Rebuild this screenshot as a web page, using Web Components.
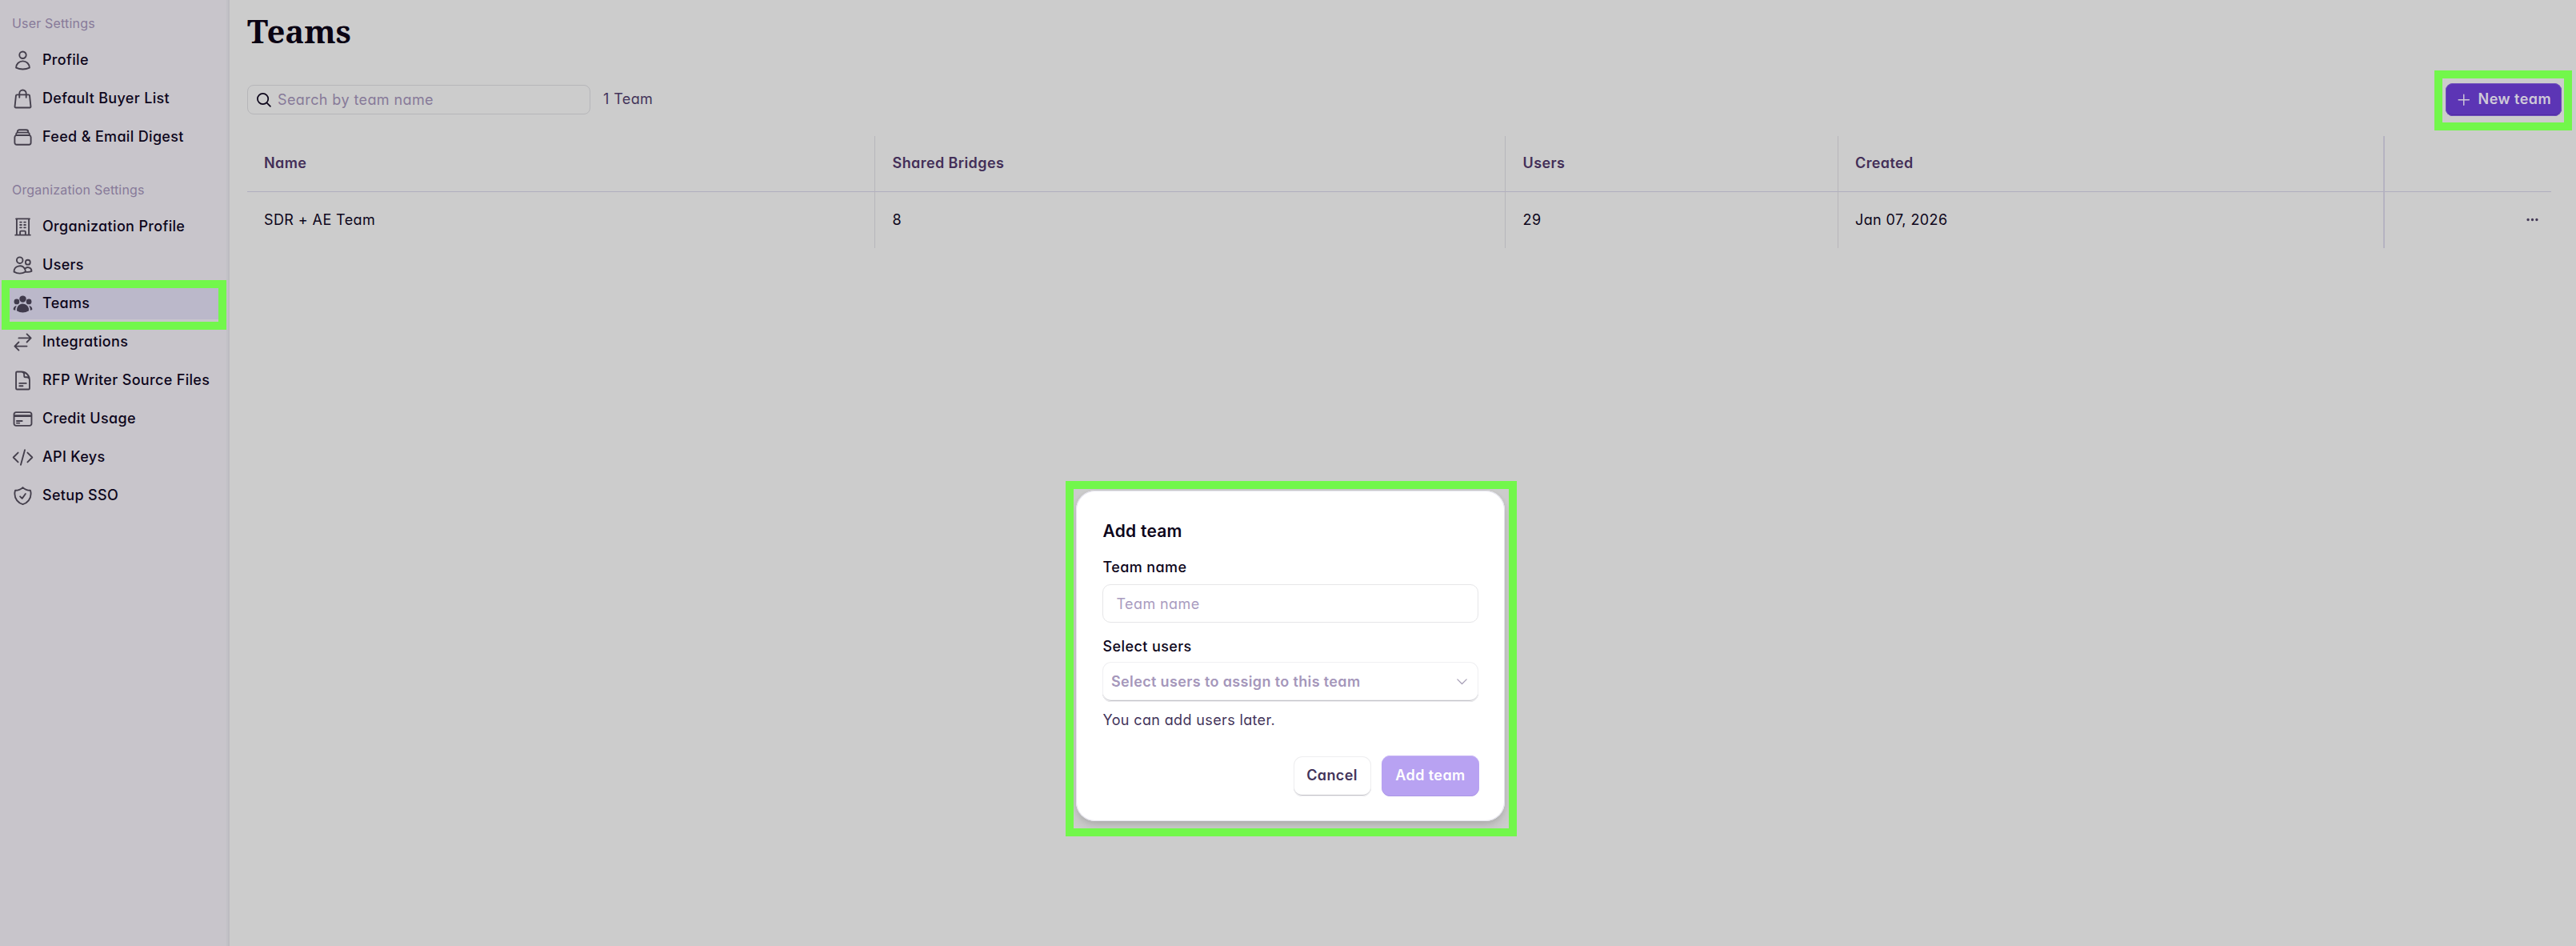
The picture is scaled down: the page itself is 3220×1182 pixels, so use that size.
<!DOCTYPE html>
<html lang="en">
<head>
<meta charset="utf-8">
<title>Teams</title>
<style>
html,body{margin:0;height:100%}
body{background:#ccc;overflow:hidden;font:400 18px/21px Inter,"Liberation Sans",sans-serif;font-feature-settings:"cv11";letter-spacing:.4px;color:#0d061b}
</style>
</head>
<body>
<settings-app></settings-app>
<script>
const define = (name, html, setup) => {
  const t = document.createElement('template');
  t.innerHTML = html;
  customElements.define(name, class extends HTMLElement {
    connectedCallback() {
      if (this.shadowRoot) return;
      const root = this.attachShadow({mode: 'open'});
      root.append(t.content.cloneNode(true));
      if (setup) setup(this, root);
    }
  });
};

const ICONS = {
  user: 'M15.75 6a3.75 3.75 0 1 1-7.5 0 3.75 3.75 0 0 1 7.5 0ZM4.501 20.118a7.5 7.5 0 0 1 14.998 0A17.933 17.933 0 0 1 12 21.75c-2.676 0-5.216-.584-7.499-1.632Z',
  bag: 'M15.75 10.5V6a3.75 3.75 0 1 0-7.5 0v4.5m11.356-1.993 1.263 12c.07.665-.45 1.243-1.119 1.243H4.25a1.125 1.125 0 0 1-1.12-1.243l1.264-12A1.125 1.125 0 0 1 5.513 7.5h12.974c.576 0 1.059.435 1.119 1.007Z',
  stack: 'M6 6.878V6a2.25 2.25 0 0 1 2.25-2.25h7.5A2.25 2.25 0 0 1 18 6v.878m-12 0c.235-.083.487-.128.75-.128h10.5c.263 0 .515.045.75.128m-12 0A2.25 2.25 0 0 0 4.5 9v.878m13.5-3A2.25 2.25 0 0 1 19.5 9v.878m0 0a2.246 2.246 0 0 0-.75-.128H5.25c-.263 0-.515.045-.75.128m15 0A2.25 2.25 0 0 1 21 12v6a2.25 2.25 0 0 1-2.25 2.25H5.25A2.25 2.25 0 0 1 3 18v-6c0-.98.626-1.813 1.5-2.122',
  building: 'M3.75 21h16.5M4.5 3h15M5.25 3v18m13.5-18v18M9 6.75h1.5m-1.5 3h1.5m-1.5 3h1.5m3-6H15m-1.5 3H15m-1.5 3H15M9 21v-3.375c0-.621.504-1.125 1.125-1.125h3.75c.621 0 1.125.504 1.125 1.125V21',
  users: 'M15 19.128a9.38 9.38 0 0 0 2.625.372 9.337 9.337 0 0 0 4.121-.952 4.125 4.125 0 0 0-7.533-2.493M15 19.128v-.003c0-1.113-.285-2.16-.786-3.07M15 19.128v.106A12.318 12.318 0 0 1 8.624 21c-2.331 0-4.512-.645-6.374-1.766l-.001-.109a6.375 6.375 0 0 1 11.964-3.07M12 6.375a3.375 3.375 0 1 1-6.75 0 3.375 3.375 0 0 1 6.75 0Zm8.25 2.25a2.625 2.625 0 1 1-5.25 0 2.625 2.625 0 0 1 5.25 0Z',
  group: 'M8.25 6.75a3.75 3.75 0 1 1 7.5 0 3.75 3.75 0 0 1-7.5 0ZM15.75 9.75a3 3 0 1 1 6 0 3 3 0 0 1-6 0ZM2.25 9.75a3 3 0 1 1 6 0 3 3 0 0 1-6 0ZM6.31 15.117A6.745 6.745 0 0 1 12 12a6.745 6.745 0 0 1 6.709 7.498.75.75 0 0 1-.372.568A12.696 12.696 0 0 1 12 21.75c-2.305 0-4.47-.612-6.337-1.684a.75.75 0 0 1-.372-.568 6.787 6.787 0 0 1 1.019-4.38ZM5.082 14.254a8.287 8.287 0 0 0-1.308 5.135 9.687 9.687 0 0 1-1.764-.44l-.115-.04a.563.563 0 0 1-.373-.487l-.01-.121a3.75 3.75 0 0 1 3.57-4.047ZM20.226 19.389a8.287 8.287 0 0 0-1.308-5.135 3.75 3.75 0 0 1 3.57 4.047l-.01.121a.563.563 0 0 1-.373.486l-.115.04c-.567.2-1.156.349-1.764.441Z',
  arrows: 'M7.5 21 3 16.5m0 0L7.5 12M3 16.5h13.5m0-13.5L21 7.5m0 0L16.5 12M21 7.5H7.5',
  doc: 'M19.5 14.25v-2.625a3.375 3.375 0 0 0-3.375-3.375h-1.5A1.125 1.125 0 0 1 13.5 7.125v-1.5a3.375 3.375 0 0 0-3.375-3.375H8.25m0 12.75h7.5m-7.5 3H12M10.5 2.25H5.625c-.621 0-1.125.504-1.125 1.125v17.25c0 .621.504 1.125 1.125 1.125h12.75c.621 0 1.125-.504 1.125-1.125V11.25a9 9 0 0 0-9-9Z',
  card: 'M2.25 8.25h19.5M2.25 9h19.5m-16.5 5.25h6m-6 2.25h3m-3.75 3h15a2.25 2.25 0 0 0 2.25-2.25V6.75A2.25 2.25 0 0 0 19.5 4.5h-15a2.25 2.25 0 0 0-2.25 2.25v10.5A2.25 2.25 0 0 0 4.5 19.5Z',
  code: 'M17.25 6.75 22.5 12l-5.25 5.25m-10.5 0L1.5 12l5.25-5.25m7.5-3-4.5 16.5',
  shield: 'M9 12.75 11.25 15 15 9.75m-3-7.036A11.959 11.959 0 0 1 3.598 6 11.99 11.99 0 0 0 3 9.749c0 5.592 3.824 10.29 9 11.623 5.176-1.332 9-6.03 9-11.622 0-1.31-.21-2.571-.598-3.751h-.152c-3.196 0-6.1-1.248-8.25-3.285Z',
  search: 'm21.5 21.5-5.4-5.4M18.3 10.2a8 8 0 1 1-16 0 8 8 0 0 1 16 0Z',
  plus: 'M12 3v18M3 12h18',
  chevron: 'm4 8.25 8 8 8-8',
  dots: 'M5.1 12a3.1 3.1 0 1 1-6.2 0 3.1 3.1 0 0 1 6.2 0ZM15.1 12a3.1 3.1 0 1 1-6.2 0 3.1 3.1 0 0 1 6.2 0ZM25.1 12a3.1 3.1 0 1 1-6.2 0 3.1 3.1 0 0 1 6.2 0Z'
};

define('ui-icon', `<style>:host{display:block;flex:none}svg{display:block;overflow:visible}</style>
<svg viewBox="0 0 24 24" fill="none" stroke="currentColor" stroke-linecap="round" stroke-linejoin="round"><path/></svg>`,
(host, root) => {
  const svg = root.querySelector('svg'), size = host.getAttribute('size') || 27;
  svg.setAttribute('width', size); svg.setAttribute('height', size);
  svg.setAttribute('stroke-width', host.getAttribute('weight') || 1.65);
  if (host.hasAttribute('solid')) { svg.setAttribute('fill', 'currentColor'); svg.setAttribute('stroke', 'none'); }
  root.querySelector('path').setAttribute('d', ICONS[host.getAttribute('name')]);
});

define('nav-section', `<style>
:host{display:block}
h2{margin:0;height:31px;padding-left:15px;font:400 16px/20px Inter,"Liberation Sans",sans-serif;letter-spacing:.18px;color:#877a99}
</style><h2></h2><slot></slot>`,
(host, root) => root.querySelector('h2').textContent = host.getAttribute('label'));

define('nav-item', `<style>
:host{display:flex;position:relative;height:48px;padding-left:14.8px;gap:11.2px;align-items:flex-start;font-weight:500;letter-spacing:.33px;white-space:nowrap}
ui-icon{margin-top:12px;color:#443f4c}
span{line-height:49px}
:host([active]){background:linear-gradient(#bbb8ca,#bbb8ca) 5px 4px/268px 41px no-repeat}
:host([active]) ui-icon{color:#403a4c}
:host([active])::after{content:"";position:absolute;left:2px;top:-4px;width:261px;height:42px;border:10px solid #72f74b;z-index:1}
</style><ui-icon></ui-icon><span><slot></slot></span>`,
(host, root) => {
  const i = root.querySelector('ui-icon'), n = document.createElement('ui-icon');
  n.setAttribute('name', host.getAttribute('icon'));
  if (host.hasAttribute('active')) n.setAttribute('solid', '');
  i.replaceWith(n);
});

define('side-nav', `<style>
:host{display:flex;flex-direction:column;gap:33px;box-sizing:border-box;width:287px;padding-top:19px;background:#c8c5cb;border-right:2px solid #bdbcc1;box-shadow:inset -2px 0 #c2c1c6}
</style>
<nav-section label="User Settings">
<nav-item icon="user">Profile</nav-item><nav-item icon="bag">Default Buyer List</nav-item><nav-item icon="stack">Feed &amp; Email Digest</nav-item>
</nav-section>
<nav-section label="Organization Settings">
<nav-item icon="building">Organization Profile</nav-item><nav-item icon="users">Users</nav-item><nav-item icon="group" active>Teams</nav-item><nav-item icon="arrows">Integrations</nav-item><nav-item icon="doc">RFP Writer Source Files</nav-item><nav-item icon="card">Credit Usage</nav-item><nav-item icon="code">API Keys</nav-item><nav-item icon="shield">Setup SSO</nav-item>
</nav-section>`);

define('search-field', `<style>
:host{display:flex;box-sizing:border-box;width:429px;height:37px;margin-top:2px;border:1px solid #b6b6b9;border-radius:8px;padding-left:9.5px;gap:7.5px;color:#0d061b}
ui-icon{margin-top:7.5px}
span{line-height:35px;color:#877a99}
</style><ui-icon name="search" size="20" weight="2.1"></ui-icon><span><slot></slot></span>`);

define('new-button', `<style>
:host{display:flex;position:relative;box-sizing:border-box;width:145px;height:40.5px;padding-left:14px;gap:9px;border-radius:9px;background:#5c35b5;box-shadow:inset 0 0 0 1px #6f50bb,inset 0 -2px #5029a4;color:#cfcad8;font-weight:600}
:host::after{content:"";position:absolute;left:-14px;top:-16px;width:152px;height:55px;border:10px solid #72f74b}
ui-icon{margin-top:12px}
span{line-height:39px;white-space:nowrap;letter-spacing:.46px}
</style><ui-icon name="plus" size="17.5" weight="2"></ui-icon><span><slot></slot></span>`);

define('tool-bar', `<style>
:host{display:flex;align-items:flex-start;height:41px;margin-top:45px}
p{margin:0 auto 0 16px;line-height:39px;color:#43345a}
</style><search-field>Search by team name</search-field><p>1 Team</p><new-button>New team</new-button>`);

define('team-table', `<style>
:host{display:grid;grid-template-columns:785px 788px 416px 683px 208px;grid-template-rows:70px 70px;margin-top:25px;width:2880px}
div{box-sizing:border-box;border-right:1px solid #b7b6bb;padding-left:21.6px;line-height:69px;height:70px}
.h{line-height:67px;font-weight:600;color:#432f58;border-bottom:1px solid #b0aebf}
.f{padding-left:21px}
.w{padding-left:21px;border-right:2px solid #b5b3c1}
.l{border-right:0;display:flex}
ui-icon{margin:28.3px 0 0 156.6px;color:#453a57}
</style>
<div class="h f">Name</div><div class="h">Shared Bridges</div><div class="h">Users</div><div class="h w">Created</div><div class="h l"></div>
<div class="f">SDR + AE Team</div><div>8</div><div>29</div><div class="w">Jan 07, 2026</div><div class="l"><ui-icon name="dots" size="13" solid></ui-icon></div>`);

define('text-field', `<style>
:host{display:block;box-sizing:border-box;height:48px;border:1px solid #e6e6e8;border-radius:10px;padding-left:16.5px;line-height:47px;color:#a99cbf}
</style><slot></slot>`);

define('select-field', `<style>
:host{display:flex;justify-content:space-between;box-sizing:border-box;height:50px;border-radius:11px;padding:0 12px 0 11px;line-height:49px;font-weight:600;letter-spacing:.36px;color:#a597bb;background:#fff;box-shadow:inset 0 0 0 1px #f0f0f2,inset 0 -2px #c3c2c8,inset 0 -3px #f1f1f3}
ui-icon{margin-top:16.2px;color:#a49cb4}
</style><slot></slot><ui-icon name="chevron" size="17" weight="1.7"></ui-icon>`);

define('ui-button', `<style>
:host{display:block;box-sizing:border-box;height:50px;width:97px;margin-top:1px;border-radius:11px;text-align:center;font-weight:600;line-height:47px;color:#43345a;background:#fff;box-shadow:inset 0 0 0 1px #eeeef0,inset 0 -2px #c3c2c8}
:host([primary]){width:122px;height:51px;margin-top:0;line-height:49px;color:#fff;background:#b8a2f2;box-shadow:inset 0 1px #c6b4f4,inset 0 -1px #ad98e6}
</style><slot></slot>`);

define('team-dialog', `<style>
:host{display:block;position:absolute;left:1345px;top:613px;box-sizing:border-box;width:536px;height:413px;padding:38px 33px 31px;border-radius:24px;background:#fff;box-shadow:inset 0 0 0 1px #e4e3ed,0 8px 14px -2px rgba(0,0,0,.11),0 2px 6px rgba(0,0,0,.08)}
:host::after{content:"";position:absolute;left:-13px;top:-12px;width:544px;height:424px;border:10px solid #72f74b}
h1{margin:0 0 22px .5px;font:600 21px/25px Inter,"Liberation Sans",sans-serif;letter-spacing:.25px}
label{display:block;font-weight:500;margin-left:.5px}
text-field{margin:11px 0 19px}
select-field{margin:9px 0 12px}
p{margin:0 0 34px .5px;letter-spacing:.36px;color:#43345a}
footer{display:flex;justify-content:flex-end;gap:13.5px;margin-right:-1px}
</style>
<h1>Add team</h1><label>Team name</label><text-field>Team name</text-field>
<label>Select users</label><select-field>Select users to assign to this team</select-field>
<p>You can add users later.</p>
<footer><ui-button>Cancel</ui-button><ui-button primary>Add team</ui-button></footer>`);

define('settings-app', `<style>
:host{display:flex;position:relative;height:1182px;width:3220px}
main{flex:1;padding:18px 18px 0 22px}
h1{margin:0;font:700 40px/41px "Noto Serif",serif;letter-spacing:-.1px;color:#0a0313}
</style><side-nav></side-nav><main><h1>Teams</h1><tool-bar></tool-bar><team-table></team-table></main><team-dialog></team-dialog>`);
</script>
</body>
</html>
